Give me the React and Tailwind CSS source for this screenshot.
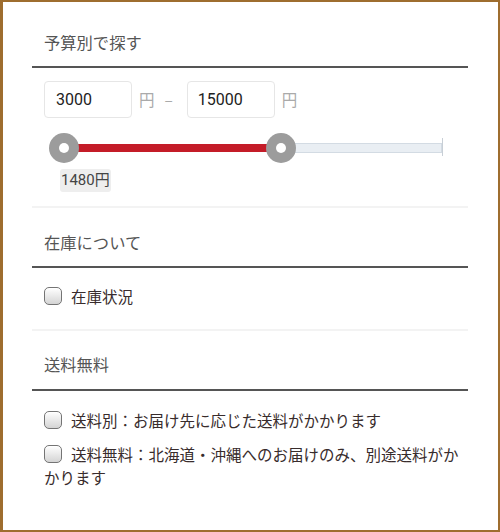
import React from "react";

const jp = { fontFamily: '"Noto Sans CJK JP", "Noto Sans", sans-serif' };
const num = { fontFamily: 'Roboto, "Noto Sans CJK JP", sans-serif' };

function Checkbox() {
  return (
    <span className="inline-block h-[18px] w-[18px] mr-[9px] align-[-2px] rounded-[5px] border-[1.5px] border-[#747474] bg-gradient-to-b from-[#ffffff] to-[#d4d4d4] shadow-[inset_0_1px_1px_rgba(255,255,255,0.9)]" />
  );
}

function Header({ children, pt, pb }) {
  return (
    <div className={`${pt} ${pb} pl-3 border-b-2 border-[#555555] text-[16.3px] leading-[22px] text-[#555555]`}>
      {children}
    </div>
  );
}

export default function App() {
  return (
    <div
      className="w-[500px] h-[532px] bg-white border-l-[3px] border-t-2 border-r-2 border-b-2 border-[#9e6d2f] overflow-hidden"
      style={jp}
    >
      <div className="pl-[29px] pr-[30px]">
        {/* Section 1 */}
        <Header pt="pt-[29px]" pb="pb-[13px]">予算別で探す</Header>
        <div className="px-3 pb-[14px]">
          <div className="flex items-center mt-[13px] text-[15.5px] text-[#aaaaaa]">
            <div
              className="w-[88px] h-[37px] rounded-[4px] border border-[#e6e6e6] pl-[11px] flex items-center text-[16px] text-[#222222]"
              style={num}
            >
              3000
            </div>
            <span className="ml-[7px]">円</span>
            <span className="ml-[10px]">–</span>
            <div
              className="ml-[14px] w-[88px] h-[37px] rounded-[4px] border border-[#e6e6e6] pl-[10px] flex items-center text-[16px] text-[#222222]"
              style={num}
            >
              15000
            </div>
            <span className="ml-[7px]">円</span>
          </div>

          <div className="relative h-[30px] mt-[15px]">
            <div className="absolute left-[236px] top-[10px] w-[162px] h-[10px] bg-[#e9eef3] border border-[#d3dbe3]" />
            <div className="absolute left-[398px] top-[5px] w-px h-[18px] bg-[#c8cfd6]" />
            <div className="absolute left-[20px] top-[11px] w-[216px] h-[8px] bg-[#c41c28]" />
            <div className="absolute left-[5px] top-0 w-[30px] h-[30px] rounded-full bg-[#9c9c9c] flex items-center justify-center">
              <div className="w-[10px] h-[10px] rounded-full bg-white" />
            </div>
            <div className="absolute left-[222px] top-0 w-[30px] h-[30px] rounded-full bg-[#9c9c9c] flex items-center justify-center">
              <div className="w-[10px] h-[10px] rounded-full bg-white" />
            </div>
          </div>

          <div
            className="mt-[6px] ml-[16px] inline-flex items-center h-[23px] px-[1px] rounded-[3px] bg-[#eeeeee] text-[15px] text-[#444444]"
            style={num}
          >
            1480円
          </div>
        </div>
        <div className="h-[2px] bg-[#f3f3f3]" />

        {/* Section 2 */}
        <Header pt="pt-[23px]" pb="pb-[13px]">在庫について</Header>
        <div className="px-3 pt-[17px] pb-[22px] text-[15.5px] leading-[22px] text-[#382c2c]">
          <div>
            <Checkbox />
            在庫状況
          </div>
        </div>
        <div className="h-[2px] bg-[#f3f3f3]" />

        {/* Section 3 */}
        <Header pt="pt-[22px]" pb="pb-[14px]">送料無料</Header>
        <div className="pl-3 pt-[18px] text-[15.5px] leading-[23px] text-[#382c2c]">
          <div>
            <Checkbox />
            送料別：お届け先に応じた送料がかかります
          </div>
          <div className="mt-[11px]">
            <Checkbox />
            送料無料：北海道・沖縄へのお届けのみ、別途送料がかかります
          </div>
        </div>
      </div>
    </div>
  );
}
